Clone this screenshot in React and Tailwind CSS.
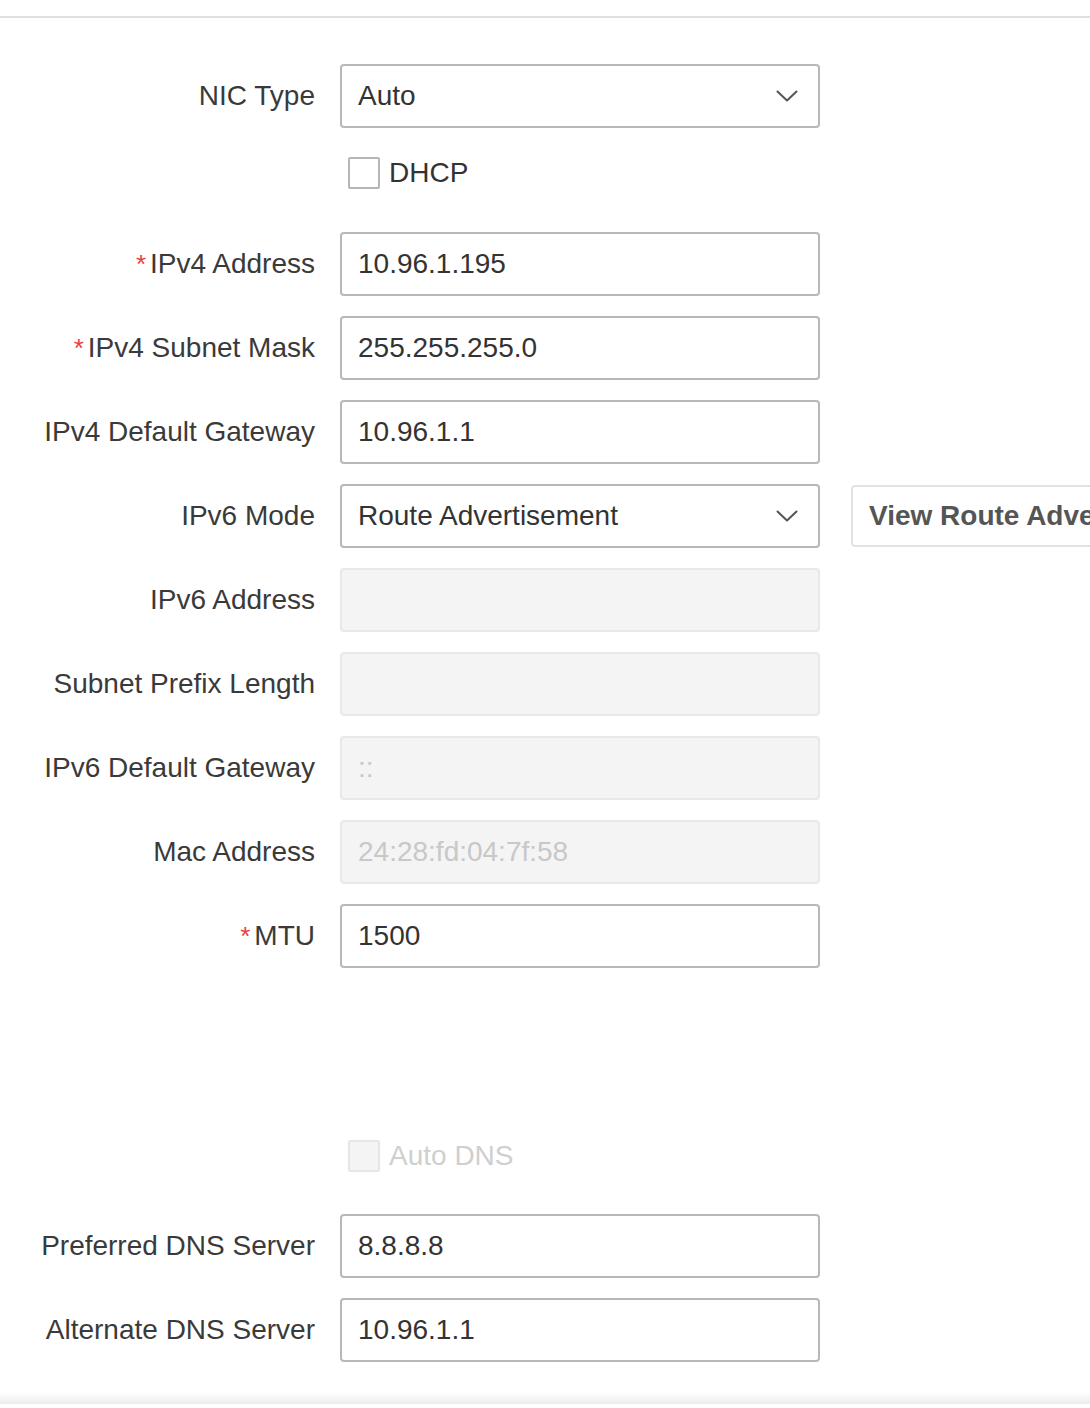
import React from 'react';

const fields = [
  { label: 'IPv4 Address', value: '10.96.1.195', required: true },
  { label: 'IPv4 Subnet Mask', value: '255.255.255.0', required: true },
  { label: 'IPv4 Default Gateway', value: '10.96.1.1' },
];

const ipv6Fields = [
  { label: 'IPv6 Address', value: '', disabled: true },
  { label: 'Subnet Prefix Length', value: '', disabled: true },
  { label: 'IPv6 Default Gateway', value: '::', disabled: true },
  { label: 'Mac Address', value: '24:28:fd:04:7f:58', disabled: true },
  { label: 'MTU', value: '1500', required: true },
];

const Chevron = () => (
  <svg width="22" height="12" viewBox="0 0 22 12" fill="none">
    <path d="M1.5 1.5 L11 10.5 L20.5 1.5" stroke="#555" strokeWidth="2" strokeLinecap="round" strokeLinejoin="round" />
  </svg>
);

const Label = ({ children, required }) => (
  <div className="w-[315px] shrink-0 text-right text-[28px] text-[#3a3a3a] leading-none">
    {required && <span className="text-[#e84040] mr-[4px] text-[26px]">*</span>}
    {children}
  </div>
);

const TextInput = ({ value, disabled }) => (
  <div
    className={
      disabled
        ? 'ml-[25px] w-[480px] h-[64px] shrink-0 rounded-[4px] border-2 border-[#e8e8e8] bg-[#f4f4f4] flex items-center px-[16px] text-[28px] text-[#c8c8c8]'
        : 'ml-[25px] w-[480px] h-[64px] shrink-0 rounded-[4px] border-2 border-[#b8b8b8] bg-white flex items-center px-[16px] text-[28px] text-[#333]'
    }
  >
    {value}
  </div>
);

const Select = ({ value }) => (
  <div className="ml-[25px] w-[480px] h-[64px] shrink-0 rounded-[4px] border-2 border-[#b8b8b8] bg-white flex items-center justify-between pl-[16px] pr-[20px] text-[28px] text-[#333]">
    <span>{value}</span>
    <Chevron />
  </div>
);

const Checkbox = ({ label, disabled }) => (
  <div className="flex items-center h-[32px] ml-[348px]">
    <div
      className={
        disabled
          ? 'w-[32px] h-[32px] rounded-[2px] border-2 border-[#e6e6e6] bg-[#f4f4f4]'
          : 'w-[32px] h-[32px] rounded-[2px] border-2 border-[#b5b5b5] bg-white'
      }
    />
    <span className={disabled ? 'ml-[9px] text-[28px] leading-none text-[#cfcfcf]' : 'ml-[9px] text-[28px] leading-none text-[#333]'}>{label}</span>
  </div>
);

const Row = ({ children }) => <div className="flex items-center h-[64px]">{children}</div>;

export default function App() {
  return (
    <div className="w-[1090px] h-[1408px] overflow-hidden bg-white flex flex-col" style={{ fontFamily: '"Liberation Sans", Arial, sans-serif' }}>
      <div className="h-[16px] shrink-0" />
      <div className="h-[2px] shrink-0 bg-[#e0e0e0]" />
      <div className="flex flex-col pt-[46px]">
        <Row>
          <Label>NIC Type</Label>
          <Select value="Auto" />
        </Row>
        <div className="h-[29px]" />
        <Checkbox label="DHCP" />
        <div className="h-[43px]" />
        <div className="flex flex-col gap-[20px]">
          {fields.map((f) => (
            <Row key={f.label}>
              <Label required={f.required}>{f.label}</Label>
              <TextInput value={f.value} />
            </Row>
          ))}
          <Row>
            <Label>IPv6 Mode</Label>
            <Select value="Route Advertisement" />
            <div className="ml-[31px] h-[62px] shrink-0 rounded-[4px] border-2 border-[#e3e3e3] flex items-center pl-[16px] pr-[16px] text-[28px] font-bold text-[#555] whitespace-nowrap">
              View Route Advertisement
            </div>
          </Row>
          {ipv6Fields.map((f) => (
            <Row key={f.label}>
              <Label required={f.required}>{f.label}</Label>
              <TextInput value={f.value} disabled={f.disabled} />
            </Row>
          ))}
        </div>
        <div className="h-[172px]" />
        <Checkbox label="Auto DNS" disabled />
        <div className="h-[42px]" />
        <div className="flex flex-col gap-[20px]">
          <Row>
            <Label>Preferred DNS Server</Label>
            <TextInput value="8.8.8.8" />
          </Row>
          <Row>
            <Label>Alternate DNS Server</Label>
            <TextInput value="10.96.1.1" />
          </Row>
        </div>
      </div>
      <div className="flex-1" />
      <div className="h-[12px] shrink-0 bg-gradient-to-b from-white to-[#ececec]" />
      <div className="h-[4px] shrink-0 bg-white" />
    </div>
  );
}
